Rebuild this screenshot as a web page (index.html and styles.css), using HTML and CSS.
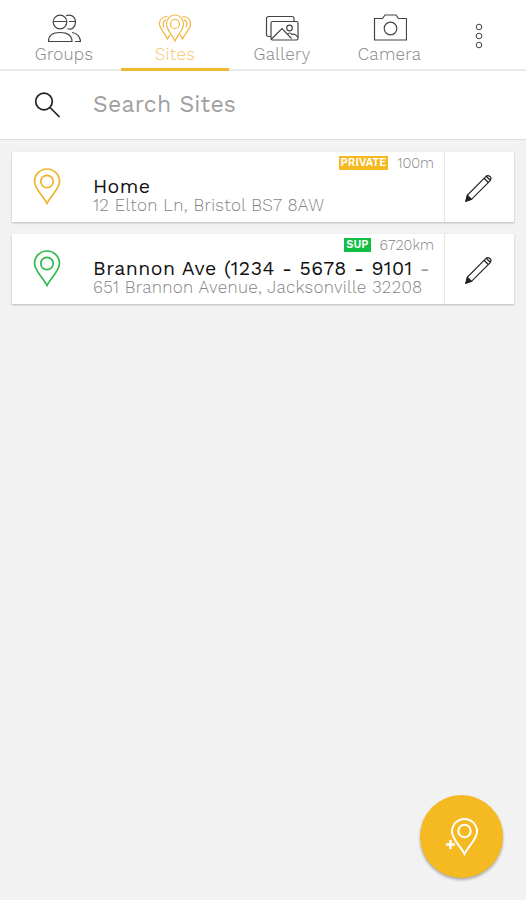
FILE: index.html
```
<!DOCTYPE html>
<html lang="en">
<head>
    <meta charset="UTF-8">
    <meta name="viewport" content="width=device-width, initial-scale=1.0">
    <title>Sites</title>
    <link rel="stylesheet" href="styles.css">
</head>
<body>
    <svg width="0" height="0" class="sprite">
        <symbol id="pin" viewBox="0 0 28 37">
            <path d="M14 35.5C10.500 28 1.500 21 1.500 13.500a12.500 12.500 0 0 1 25 0C26.500 21 17.500 28 14 35.500z"/>
            <circle cx="14" cy="13.500" r="6.200"/>
        </symbol>
        <symbol id="pencil" viewBox="0 0 28 28">
            <path d="M1 27l1.500-6L20.500 2.800c3-3 7.200.8 4.500 4L6.500 25.300zM19.300 4.500l4 4M21.500 2.500l4 4"/>
            <path class="tip" d="M1 27l1.400-5.500 4 3.700z"/>
        </symbol>
    </svg>

    <nav class="tabs">
        <a class="tab">
            <svg class="tab-icon" width="34" height="30" viewBox="0 0 34 30">
                <circle cx="13" cy="9" r="6.800"/>
                <path d="M6.200 8.500h13.600M1.500 28.500c0-6.500 5-9 11.500-9s12 2.500 12 9zM19 2.700c4.500-2 9.500 1 9.500 6.300s-4 8.500-8 6.500M22 8.500h6.500M25 19.500c4.500.5 8.500 4 8.500 9H28"/>
            </svg>
            <span class="tab-label">Groups</span>
        </a>
        <a class="tab active">
            <svg class="tab-icon" width="34" height="30" viewBox="0 0 34 30">
                <path d="M17 28C14.500 22 8.500 17 8.500 11a8.500 9 0 0 1 17 0c0 6-6 11-8.500 17z"/>
                <circle cx="17" cy="11" r="4.500"/>
                <path d="M9.500 3.500C5 3.500 1.500 6 1.500 11c0 5 5.500 9 8 15l2.500-4.500M8 6.500c-3 2-3.500 5-2 8M24.500 3.500c4.500 0 8 2.500 8 7.500 0 5-5.500 9-8 15L22 21.500M26 6.500c3 2 3.500 5 2 8"/>
            </svg>
            <span class="tab-label">Sites</span>
        </a>
        <a class="tab">
            <svg class="tab-icon" width="34" height="30" viewBox="0 0 34 30">
                <path d="M6 23.500H3.500a2 2 0 0 1-2-2v-16a2 2 0 0 1 2-2H27a2 2 0 0 1 2 2V8"/>
                <rect x="6" y="8.500" width="27" height="18.500" rx="1.500"/>
                <circle cx="24.500" cy="15" r="2.800"/>
                <path d="M6 26.500L17 15.500l9.500 10M22 21.500c2-2 4-2 5 0 2-1 4 0 6 3"/>
            </svg>
            <span class="tab-label">Gallery</span>
        </a>
        <a class="tab">
            <svg class="tab-icon" width="34" height="30" viewBox="0 0 34 30">
                <path d="M1.500 5.500h8L12 2h11l2.500 3.500h8V27h-32z"/>
                <circle cx="17.500" cy="15.500" r="6.300"/>
            </svg>
            <span class="tab-label">Camera</span>
        </a>
        <a class="more">
            <svg width="10" height="28" viewBox="0 0 10 28">
                <circle cx="5" cy="5" r="2.800"/>
                <circle cx="5" cy="14" r="2.800"/>
                <circle cx="5" cy="23" r="2.800"/>
            </svg>
        </a>
    </nav>

    <div class="search">
        <svg class="search-icon" width="28" height="28" viewBox="0 0 28 28">
            <circle cx="10" cy="10.500" r="8.300"/>
            <path d="M16 16.500l9.500 9.500"/>
        </svg>
        <span class="search-text">Search Sites</span>
    </div>

    <main class="sites">
        <div class="card">
            <svg class="card-pin private"><use href="#pin"/></svg>
            <div class="card-body">
                <div class="card-meta">
                    <span class="badge badge-private">PRIVATE</span>
                    <span class="distance">100m</span>
                </div>
                <div class="card-title">Home</div>
                <div class="card-address">12 Elton Ln, Bristol BS7 8AW</div>
            </div>
            <div class="card-edit"><svg class="pencil"><use href="#pencil"/></svg></div>
        </div>
        <div class="card">
            <svg class="card-pin sup"><use href="#pin"/></svg>
            <div class="card-body">
                <div class="card-meta">
                    <span class="badge badge-sup">SUP</span>
                    <span class="distance">6720km</span>
                </div>
                <div class="card-title">Brannon Ave (1234 - 5678 - 9101 <span class="fade">-</span></div>
                <div class="card-address">651 Brannon Avenue, Jacksonville 32208</div>
            </div>
            <div class="card-edit"><svg class="pencil"><use href="#pencil"/></svg></div>
        </div>
    </main>

    <div class="fab">
        <svg width="36" height="40" viewBox="0 0 36 40">
            <path d="M20.500 37C17 29.500 8 22.500 8 14.500a12.500 12.500 0 0 1 25 0C33 22.500 24 29.500 20.500 37z"/>
            <circle cx="20.500" cy="14" r="6.200"/>
            <path class="plus" d="M6.500 23v9M2 27.500h9"/>
        </svg>
    </div>
</body>
</html>
```
FILE: styles.css
```
* {
    box-sizing: border-box;
}
body {
    margin: 0;
    min-height: 900px;
    background: #f2f2f2;
    font-family: "Work Sans", Inter, "Liberation Sans", sans-serif;
    font-weight: 300;
    color: #858585;
}
svg {
    display: block;
    fill: none;
    stroke: currentColor;
    flex: none;
}
.sprite {
    position: absolute;
}
.tabs {
    display: grid;
    grid-template-columns: 114px 108px 106px 109px 69px;
    height: 71px;
    padding-left: 7px;
    background: #fff;
    border-bottom: 2px solid #e9e9e9;
}
.tab {
    display: flex;
    flex-direction: column;
    align-items: center;
    height: 71px;
    padding-top: 13px;
}
.tab-icon {
    color: #444;
    stroke-width: 1.2;
}
.tab-label {
    margin-top: 1px;
    font-size: 17px;
    line-height: 21px;
    letter-spacing: 0.3px;
}
.active {
    border-bottom: 3px solid #f0b92f;
    color: #f8c667;
}
.active .tab-icon {
    color: #f3b43a;
}
.more {
    display: flex;
    justify-content: center;
    padding-top: 22px;
    color: #444;
}
.search {
    display: flex;
    align-items: center;
    height: 69px;
    padding-left: 34px;
    background: #fff;
    border-bottom: 1px solid #dedede;
}
.search-icon {
    color: #222;
    stroke-width: 1.7;
}
.search-text {
    margin: -1px 0 0 31px;
    font-size: 23px;
    font-weight: 400;
    letter-spacing: 0.2px;
    color: #a0a0a0;
}
.sites {
    display: flex;
    flex-direction: column;
    gap: 12px;
    padding: 12px 12px 0 12px;
}
.card {
    display: flex;
    height: 70px;
    background: #fff;
    box-shadow: 0 1px 2px rgba(0,0,0,0.25);
}
.card-pin {
    width: 28px;
    height: 37px;
    margin: 16px 32px 0 21px;
    stroke-width: 1.7;
}
.private {
    color: #efb42c;
}
.sup {
    color: #2bbd4b;
}
.card-body {
    flex: 1;
    min-width: 0;
    white-space: nowrap;
}
.card-meta {
    display: flex;
    justify-content: flex-end;
    align-items: center;
    gap: 9px;
    height: 22px;
    padding-right: 10px;
}
.badge {
    height: 14px;
    padding: 0 2px;
    font-size: 11px;
    font-weight: 600;
    line-height: 14px;
    letter-spacing: 0.1px;
    color: #fff;
}
.badge-private {
    background: #f5b921;
}
.badge-sup {
    background: #12bf45;
}
.distance {
    font-size: 14.500px;
}
.card-title {
    margin-top: 3px;
    font-size: 19.500px;
    line-height: 20px;
    font-weight: 400;
    letter-spacing: 0.45px;
    color: #111;
}
.fade {
    color: #999;
}
.card-address {
    font-size: 17px;
    line-height: 17px;
    letter-spacing: 0.3px;
}
.card-edit {
    width: 70px;
    border-left: 1px solid #e6e6e6;
    display: flex;
    align-items: center;
    justify-content: center;
    padding: 2px 2px 0 0;
    color: #222;
}
.pencil {
    width: 28px;
    height: 28px;
    stroke-width: 1.2;
}
.tip {
    fill: currentColor;
}
.fab {
    position: fixed;
    right: 23px;
    bottom: 22px;
    display: flex;
    align-items: center;
    justify-content: center;
    width: 83px;
    height: 83px;
    border-radius: 50%;
    background: #f5b921;
    color: #fff;
    box-shadow: 0 2px 3px rgba(0,0,0,0.3);
}
.fab svg {
    stroke-width: 2;
}
.plus {
    stroke-width: 2.500;
}
```
